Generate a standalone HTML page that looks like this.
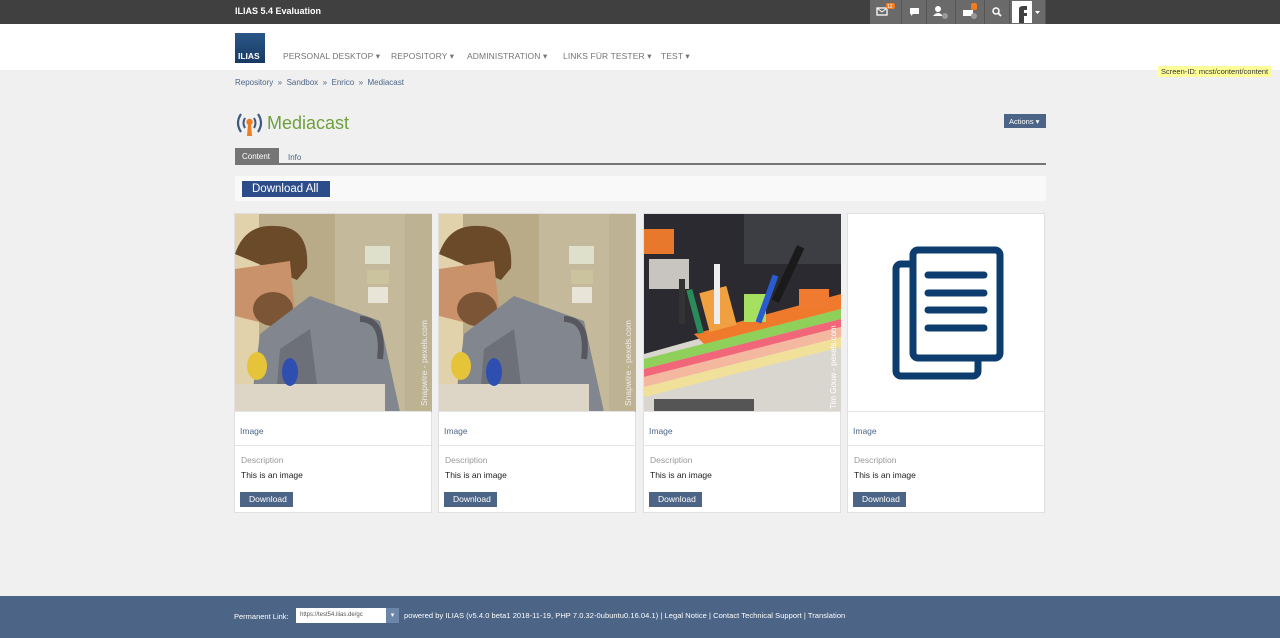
<!DOCTYPE html>
<html><head><meta charset="utf-8"><style>
*{margin:0;padding:0;box-sizing:border-box}
body{width:1280px;height:638px;background:#f0f0f0;font-family:"Liberation Sans","DejaVu Sans",sans-serif;position:relative;overflow:hidden}
.abs{position:absolute}
#top{left:0;top:0;width:1280px;height:24px;background:#404040}
#top .t{left:235px;top:6px;color:#fff;font-size:9px;font-weight:bold}
.ic{top:0;height:24px;background:#6a6a6a;border-right:1px solid #555}
#nav{left:0;top:24px;width:1280px;height:46px;background:#fff}
#logo{left:235px;top:33px;width:30px;height:30px;background:linear-gradient(#2a5788,#173a63);color:#fff;font-size:8.5px;font-weight:bold;padding:18px 0 0 3px}
.nv{top:51px;font-size:8.5px;color:#757575;letter-spacing:.1px}
.bc{top:78px;font-size:8px;color:#4c6586}
#title{left:267px;top:113px;font-size:18px;color:#6ea03c}
#act{left:1004px;top:114px;width:42px;height:14px;background:#4c6586;color:#fff;font-size:7.5px;padding:3px 0 0 5px}
#tabline{left:235px;top:163px;width:811px;height:2px;background:#757575}
#tab1{left:235px;top:148px;width:44px;height:15px;background:#757575;color:#fff;font-size:8px;padding:4px 0 0 7px}
#tab2{left:288px;top:153px;color:#4c6586;font-size:8px}
#tb{left:235px;top:176px;width:811px;height:25px;background:#f9f9f9}
#dl{left:242px;top:181px;width:88px;height:16px;background:#2c4d8a;color:#fff;font-size:11.5px;padding:1px 0 0 10px;line-height:14px}
.card{top:213px;width:198px;height:300px;background:#fff;border:1px solid #e0e0e0}
.card svg{position:absolute;left:0;top:0}
.card .lk{position:absolute;left:5px;top:212px;font-size:8.5px;color:#4c6586}
.card .sep{position:absolute;left:0;top:231px;width:196px;height:1px;background:#e4e4e4}
.card .sep0{position:absolute;left:0;top:197px;width:196px;height:1px;background:#e4e4e4}
.card .d1{position:absolute;left:6px;top:241px;font-size:8.5px;color:#999}
.card .d2{position:absolute;left:6px;top:256px;font-size:8.5px;color:#222}
.card .bt{position:absolute;left:5px;top:278px;width:53px;height:15px;background:#4c6586;color:#fff;font-size:8.5px;padding:2px 0 0 9px}
#foot{left:0;top:596px;width:1280px;height:42px;background:#4c6586;color:#fff;font-size:7.5px}
#sid{left:1158px;top:66px;background:#ffff99;font-size:7.5px;color:#333;padding:1px 3px}
</style></head><body>
<div id="top" class="abs"><div class="t abs">ILIAS 5.4 Evaluation</div></div>
<div class="abs ic" style="left:870px;width:32px"><svg width="32" height="24"><rect x="7" y="8" width="10" height="7" fill="none" stroke="#fff" stroke-width="1.3"/><path d="M7 8l5 4 5-4" stroke="#fff" fill="none"/><rect x="16" y="3" width="9" height="6" rx="2" fill="#f07c20"/><text x="17" y="8" font-size="5" fill="#fff" font-family="Liberation Sans">12</text></svg></div>
<div class="abs ic" style="left:902px;width:25px"><svg width="25" height="24"><path d="M8 8h9v6h-6l-2 2v-2h-1z" fill="#fff"/></svg></div>
<div class="abs ic" style="left:927px;width:29px"><svg width="29" height="24"><circle cx="11" cy="9" r="3" fill="#fff"/><path d="M6 16q5-6 10 0z" fill="#fff"/><circle cx="18" cy="16" r="3" fill="#999"/></svg></div>
<div class="abs ic" style="left:956px;width:29px"><svg width="29" height="24"><rect x="7" y="10" width="10" height="6" fill="#fff"/><rect x="15" y="3" width="6" height="7" rx="2" fill="#f07c20"/><circle cx="18" cy="16" r="3" fill="#999"/></svg></div>
<div class="abs ic" style="left:985px;width:25px"><svg width="25" height="24"><circle cx="11" cy="11" r="3" fill="none" stroke="#fff" stroke-width="1.5"/><path d="M13 13l3 3" stroke="#fff" stroke-width="1.8"/></svg></div>
<div class="abs ic" style="left:1010px;width:36px"><svg width="36" height="24"><rect x="2" y="1" width="20" height="22" fill="#fff"/><path d="M9 23V9q0-3 4-3h4v4h-3v3h3v3h-3v7z" fill="#404040"/><path d="M25 11h5l-2.5 3z" fill="#fff"/></svg></div>
<div id="nav" class="abs"></div>
<div id="logo" class="abs">ILIAS</div>
<div class="abs nv" style="left:283px">PERSONAL DESKTOP ▾</div>
<div class="abs nv" style="left:391px">REPOSITORY ▾</div>
<div class="abs nv" style="left:467px">ADMINISTRATION ▾</div>
<div class="abs nv" style="left:563px">LINKS FÜR TESTER ▾</div>
<div class="abs nv" style="left:661px">TEST ▾</div>
<div id="sid" class="abs">Screen-ID: mcst/content/content</div>
<div class="abs bc" style="left:235px">Repository &nbsp;» &nbsp;Sandbox &nbsp;» &nbsp;Enrico &nbsp;» &nbsp;Mediacast</div>
<svg class="abs" style="left:234px;top:110px" width="30" height="28"><path d="M7 4q-6 9 0 18M24 4q6 9 0 18" stroke="#3d5a80" stroke-width="2.2" fill="none"/><path d="M11 8q-3 5 0 10M20 8q3 5 0 10" stroke="#3d5a80" stroke-width="2" fill="none"/><circle cx="15.5" cy="12" r="3.2" fill="#f07c20"/><path d="M14 14h3l1 12h-5z" fill="#f07c20"/></svg>
<div id="title" class="abs">Mediacast</div>
<div id="act" class="abs">Actions ▾</div>
<div id="tabline" class="abs"></div>
<div id="tab1" class="abs">Content</div>
<div id="tab2" class="abs">Info</div>
<div id="tb" class="abs"></div>
<div id="dl" class="abs">Download All</div>

<div class="abs card" style="left:234px">
<svg width="197" height="198"><rect width="197" height="198" fill="#b9aa88"/><rect width="24" height="198" fill="#e2d2ac"/><rect x="100" width="72" height="198" fill="#c4b99a"/><rect x="170" width="27" height="198" fill="#bdb292"/><rect x="130" y="32" width="25" height="18" fill="#dfe0cc"/><rect x="132" y="56" width="22" height="14" fill="#cbc39d"/><rect x="133" y="73" width="20" height="16" fill="#e8e4d8"/><path d="M0 40q10-30 40-28q35 0 32 42l-10 12z" fill="#6b4a2a"/><path d="M0 55l55-8 5 50-20 15-40-10z" fill="#c9926a"/><ellipse cx="38" cy="95" rx="20" ry="17" fill="#7b5536"/><path d="M25 120l50-38 70 25 20 91H15z" fill="#82868e"/><path d="M45 135l30-20 10 80H40z" fill="#6d7078"/><path d="M125 105q25 0 20 40" stroke="#3a3a40" stroke-width="6" fill="none" opacity=".6"/><rect x="0" y="170" width="150" height="28" fill="#ddd5c6"/><ellipse cx="22" cy="152" rx="10" ry="14" fill="#e6c43a"/><ellipse cx="55" cy="158" rx="8" ry="14" fill="#2f4fb0"/><text x="0" y="0" transform="translate(192,192) rotate(-90)" font-size="8.5" fill="#eee" font-family="Liberation Sans">Snapwire - pexels.com</text></svg>
<div class="sep0"></div><div class="lk">Image</div><div class="sep"></div><div class="d1">Description</div><div class="d2">This is an image</div><div class="bt">Download</div></div>

<div class="abs card" style="left:438px">
<svg width="197" height="198"><rect width="197" height="198" fill="#b9aa88"/><rect width="24" height="198" fill="#e2d2ac"/><rect x="100" width="72" height="198" fill="#c4b99a"/><rect x="170" width="27" height="198" fill="#bdb292"/><rect x="130" y="32" width="25" height="18" fill="#dfe0cc"/><rect x="132" y="56" width="22" height="14" fill="#cbc39d"/><rect x="133" y="73" width="20" height="16" fill="#e8e4d8"/><path d="M0 40q10-30 40-28q35 0 32 42l-10 12z" fill="#6b4a2a"/><path d="M0 55l55-8 5 50-20 15-40-10z" fill="#c9926a"/><ellipse cx="38" cy="95" rx="20" ry="17" fill="#7b5536"/><path d="M25 120l50-38 70 25 20 91H15z" fill="#82868e"/><path d="M45 135l30-20 10 80H40z" fill="#6d7078"/><path d="M125 105q25 0 20 40" stroke="#3a3a40" stroke-width="6" fill="none" opacity=".6"/><rect x="0" y="170" width="150" height="28" fill="#ddd5c6"/><ellipse cx="22" cy="152" rx="10" ry="14" fill="#e6c43a"/><ellipse cx="55" cy="158" rx="8" ry="14" fill="#2f4fb0"/><text x="0" y="0" transform="translate(192,192) rotate(-90)" font-size="8.5" fill="#eee" font-family="Liberation Sans">Snapwire - pexels.com</text></svg>
<div class="sep0"></div><div class="lk">Image</div><div class="sep"></div><div class="d1">Description</div><div class="d2">This is an image</div><div class="bt">Download</div></div>

<div class="abs card" style="left:643px">
<svg width="197" height="198"><rect width="197" height="198" fill="#2a2a30"/><rect x="0" y="15" width="30" height="25" fill="#e8792c"/><rect x="100" y="0" width="97" height="50" fill="#3d3d44"/><rect x="5" y="45" width="40" height="30" fill="#c8c4c0"/><path d="M0 140L197 85V198H0z" fill="#d9d6d0"/><path d="M0 145L197 95v10L0 155z" fill="#8fd05a"/><path d="M0 155L197 105v8L0 163z" fill="#f2667a"/><path d="M0 163L197 113v10L0 173z" fill="#f4b8a0"/><path d="M0 173L197 123v10L0 183z" fill="#f0e09a"/><path d="M50 120L197 80v15L60 130z" fill="#f07a2c"/><rect x="60" y="75" width="28" height="40" fill="#f0a040" transform="rotate(-15 74 95)"/><rect x="100" y="80" width="22" height="28" fill="#a6e060"/><rect x="70" y="50" width="6" height="60" fill="#eee"/><rect x="35" y="65" width="6" height="45" fill="#333"/><rect x="120" y="60" width="6" height="50" fill="#2b5bd0" transform="rotate(20 123 85)"/><rect x="140" y="30" width="8" height="60" fill="#1a1a1a" transform="rotate(25 144 60)"/><rect x="48" y="75" width="6" height="45" fill="#2a8a5a" transform="rotate(-15 51 97)"/><rect x="155" y="75" width="30" height="20" fill="#f07a30"/><rect x="10" y="185" width="100" height="13" fill="#555"/><text x="0" y="0" transform="translate(192,195) rotate(-90)" font-size="8" fill="#fff" font-family="Liberation Sans">Tim Gouw - pexels.com</text></svg>
<div class="sep0"></div><div class="lk">Image</div><div class="sep"></div><div class="d1">Description</div><div class="d2">This is an image</div><div class="bt">Download</div></div>

<div class="abs card" style="left:847px">
<svg width="197" height="198"><g fill="none" stroke="#0d3c6e" stroke-width="7" stroke-linecap="round" stroke-linejoin="round"><rect x="48" y="50" width="82" height="112" rx="5"/><rect x="65" y="36" width="87" height="108" rx="5" fill="#fff"/><path d="M80 61h56M80 79h56M80 96h56M80 114h56"/></g></svg>
<div class="sep0"></div><div class="lk">Image</div><div class="sep"></div><div class="d1">Description</div><div class="d2">This is an image</div><div class="bt">Download</div></div>

<div id="foot" class="abs">
<div class="abs" style="left:234px;top:16px">Permanent Link:</div>
<div class="abs" style="left:296px;top:12px;width:90px;height:15px;background:#fff;color:#555;font-size:6px;padding:4px 0 0 4px">https://test54.ilias.de/gc</div>
<div class="abs" style="left:386px;top:12px;width:13px;height:15px;background:#6c86aa;font-size:7px;text-align:center;padding-top:3px">▾</div>
<div class="abs" style="left:404px;top:15px;letter-spacing:.05px">powered by ILIAS (v5.4.0 beta1 2018-11-19, PHP 7.0.32-0ubuntu0.16.04.1) | Legal Notice | Contact Technical Support | Translation</div>
</div>
</body></html>
